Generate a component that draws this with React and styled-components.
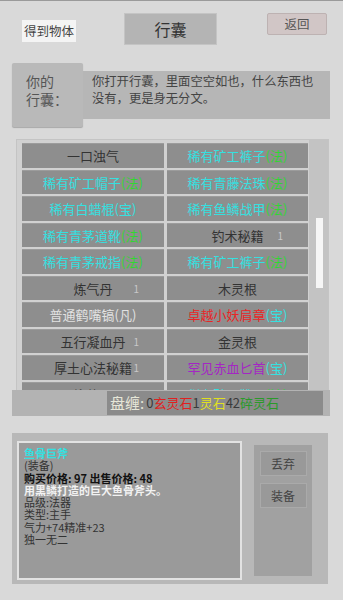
import React from "react";
import styled, { createGlobalStyle } from "styled-components";

const Global = createGlobalStyle`
  html, body { margin: 0; padding: 0; background: #d9d9d9; }
  body { font-family: "Noto Sans CJK SC", "Noto Sans", sans-serif; }
  * { box-sizing: border-box; }
`;

const Page = styled.div`
  width: 343px;
  height: 600px;
  background: #d9d9d9;
  border-top: 1px solid #9a9a9a;
  display: flex;
  flex-direction: column;
  overflow: hidden;
`;

const Header = styled.div`
  display: flex;
  align-items: flex-start;
  padding: 12px 0 0 22px;
  height: 45px;
`;

const TagBox = styled.div`
  margin-top: 7px;
  width: 54px;
  height: 22px;
  background: #f4f4f4;
  color: #444;
  font-size: 12.5px;
  line-height: 22px;
  text-align: center;
`;

const TitleBox = styled.div`
  margin-left: 48px;
  width: 93px;
  height: 32px;
  background: #b4b4b4;
  border: 1px solid #c4c4c4;
  color: #333;
  font-size: 16px;
  line-height: 30px;
  text-align: center;
`;

const BackButton = styled.div`
  margin-left: 50px;
  width: 60px;
  height: 22px;
  background: #d1c6c6;
  border: 1px solid #bdb2b2;
  border-radius: 2px;
  color: #555;
  font-size: 12.5px;
  line-height: 20px;
  text-align: center;
`;

const InfoRow = styled.div`
  display: flex;
  align-items: center;
  margin: 17px 0 0 12px;
`;

const InfoLabel = styled.div`
  width: 71px;
  height: 64px;
  background: #b9b9b9;
  border-radius: 2px;
  box-shadow: 0 1px 1px #a8a8a8;
  color: #555;
  font-size: 14px;
  line-height: 18px;
  padding: 9px 0 0 14px;
`;

const InfoText = styled.div`
  width: 247px;
  height: 48px;
  background: #b6b6b6;
  color: #444;
  font-size: 12.3px;
  line-height: 17px;
  padding: 2px 16px 0 9px;
`;

const ListPanel = styled.div`
  position: relative;
  margin: 12px 0 0 16px;
  width: 313px;
  height: 251px;
  background: #d1d1d1;
  border: 1px solid #c4c4c4;
  border-bottom: none;
  overflow: hidden;
`;

const Grid = styled.div`
  display: grid;
  grid-template-columns: 142px 141px;
  grid-auto-rows: 24.5px;
  column-gap: 3px;
  row-gap: 2px;
  padding: 3px 0 0 5px;
`;

const Cell = styled.div`
  position: relative;
  background: #8e8e8e;
  border-top: 1px solid #9c9c9c;
  font-size: 13px;
  line-height: 23px;
  text-align: center;
  white-space: nowrap;
  color: ${(p) => p.$color};
`;

const Suffix = styled.span`
  color: ${(p) => p.$color};
`;

const Count = styled.span`
  position: absolute;
  right: 25px;
  top: 0;
  font-size: 10px;
  color: #c8c8c8;
`;

const Track = styled.div`
  position: absolute;
  top: 0;
  right: 0;
  width: 19px;
  height: 100%;
  background: #c3c3c3;
`;

const Thumb = styled.div`
  position: absolute;
  top: 78px;
  left: 7px;
  width: 7px;
  height: 70px;
  background: #f6f6f6;
`;

const MoneyBar = styled.div`
  margin-left: 12px;
  width: 318px;
  height: 26px;
  background: #b3b3b3;
  display: flex;
  align-items: center;
`;

const MoneyBox = styled.div`
  margin-left: 95px;
  width: 216px;
  height: 24px;
  background: #8b8b8b;
  display: flex;
  align-items: center;
  padding-left: 3px;
  line-height: 24px;
  white-space: nowrap;
`;

const Money = styled.span`
  color: ${(p) => p.$color};
  font-size: ${(p) => p.$size || "13px"};
  padding-right: ${(p) => p.$pad || "0"};
`;

const DetailPanel = styled.div`
  margin: 17px 0 0 12px;
  width: 316px;
  height: 151px;
  background: #b8b8b8;
  display: flex;
  align-items: flex-start;
  padding: 8px 16px 0 5px;
`;

const DetailBox = styled.div`
  width: 225px;
  height: 139px;
  background: #9a9a9a;
  border: 2px solid #e2e2e2;
  padding: 4px 0 0 5px;
  font-size: 11px;
  line-height: 12.3px;
`;

const DetailLine = styled.div`
  color: ${(p) => p.$color || "#333"};
  font-weight: ${(p) => (p.$bold ? 700 : 400)};
  white-space: nowrap;
`;

const ButtonColumn = styled.div`
  margin: 4px 0 0 12px;
  width: 58px;
  height: 131px;
  background: #a1a1a1;
  display: flex;
  flex-direction: column;
  align-items: center;
  gap: 7px;
  padding-top: 6px;
`;

const ActionButton = styled.div`
  width: 47px;
  height: 25px;
  background: #999;
  border: 1px solid #aaa;
  color: #444;
  font-size: 12px;
  line-height: 23px;
  text-align: center;
`;

const CYAN = "#35e0e0";
const GREEN = "#33d633";
const DARK = "#333";
const LIGHT = "#e2e2e2";
const RED = "#e82626";
const PURPLE = "#a426c4";

const items = [
  { name: "一口浊气", color: DARK },
  { name: "稀有矿工裤子", color: CYAN, suffix: "(法)", sColor: GREEN },
  { name: "稀有矿工帽子", color: CYAN, suffix: "(法)", sColor: GREEN },
  { name: "稀有青藤法珠", color: CYAN, suffix: "(法)", sColor: GREEN },
  { name: "稀有白蜡棍", color: CYAN, suffix: "(宝)", sColor: CYAN },
  { name: "稀有鱼鳞战甲", color: CYAN, suffix: "(法)", sColor: GREEN },
  { name: "稀有青茅道靴", color: CYAN, suffix: "(法)", sColor: GREEN },
  { name: "钓术秘籍", color: DARK, count: 1 },
  { name: "稀有青茅戒指", color: CYAN, suffix: "(法)", sColor: GREEN },
  { name: "稀有矿工裤子", color: CYAN, suffix: "(法)", sColor: GREEN },
  { name: "炼气丹", color: DARK, count: 1 },
  { name: "木灵根", color: DARK },
  { name: "普通鹤嘴镐(凡)", color: LIGHT },
  { name: "卓越小妖肩章", color: RED, suffix: "(宝)", sColor: CYAN },
  { name: "五行凝血丹", color: DARK, count: 1 },
  { name: "金灵根", color: DARK },
  { name: "厚土心法秘籍", color: DARK, count: 1 },
  { name: "罕见赤血匕首", color: PURPLE, suffix: "(宝)", sColor: CYAN },
  { name: "锻体丹", color: DARK },
  { name: "稀有矿工靴子", color: CYAN, suffix: "(法)", sColor: GREEN },
];

export default function App() {
  return (
    <>
      <Global />
      <Page>
        <Header>
          <TagBox>得到物体</TagBox>
          <TitleBox>行囊</TitleBox>
          <BackButton>返回</BackButton>
        </Header>
        <InfoRow>
          <InfoLabel>
            你的
            <br />
            行囊：
          </InfoLabel>
          <InfoText>你打开行囊，里面空空如也，什么东西也没有，更是身无分文。</InfoText>
        </InfoRow>
        <ListPanel>
          <Grid>
            {items.map((it, i) => (
              <Cell key={i} $color={it.color}>
                {it.name}
                {it.suffix && <Suffix $color={it.sColor}>{it.suffix}</Suffix>}
                {it.count && <Count>{it.count}</Count>}
              </Cell>
            ))}
          </Grid>
          <Track>
            <Thumb />
          </Track>
        </ListPanel>
        <MoneyBar>
          <MoneyBox>
            <Money $color="#e6e6d8" $size="15px">盘缠</Money>
            <Money $color="#e6e6d8" $size="15px" $pad="2px">:</Money>
            <Money $color="#3a3a3a">0</Money>
            <Money $color="#e02020">玄灵石</Money>
            <Money $color="#3a3a3a">1</Money>
            <Money $color="#e0e020">灵石</Money>
            <Money $color="#3a3a3a">42</Money>
            <Money $color="#2a9a2a">碎灵石</Money>
          </MoneyBox>
        </MoneyBar>
        <DetailPanel>
          <DetailBox>
            <DetailLine $color={CYAN} $bold>鱼骨巨斧</DetailLine>
            <DetailLine>(装备)</DetailLine>
            <DetailLine $color="#111" $bold>购买价格: 97 出售价格: 48</DetailLine>
            <DetailLine $color="#f2f2f2" $bold>用黑鳞打造的巨大鱼骨斧头。</DetailLine>
            <DetailLine>品级:法器</DetailLine>
            <DetailLine>类型:主手</DetailLine>
            <DetailLine>气力+74精准+23</DetailLine>
            <DetailLine>独一无二</DetailLine>
          </DetailBox>
          <ButtonColumn>
            <ActionButton>丢弃</ActionButton>
            <ActionButton>装备</ActionButton>
          </ButtonColumn>
        </DetailPanel>
      </Page>
    </>
  );
}
